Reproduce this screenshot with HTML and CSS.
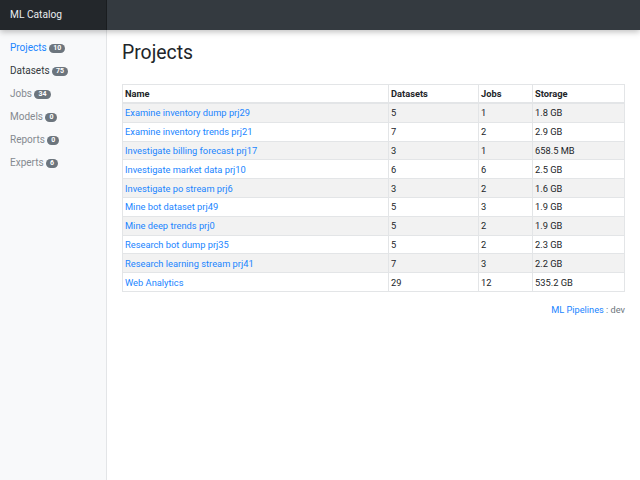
FILE: index.html
```html
<!DOCTYPE html>
<html>
<head>
<meta charset="utf-8">
<link rel="stylesheet" href="styles.css">
</head>
<body>
<header class="navbar">
  <div class="brand">ML Catalog</div>
  <div class="navfill"></div>
</header>
<div class="layout">
  <nav class="sidebar">
    <a class="nav-link active">Projects <span class="badge">10</span></a>
    <a class="nav-link hover">Datasets <span class="badge">75</span></a>
    <a class="nav-link">Jobs <span class="badge">34</span></a>
    <a class="nav-link">Models <span class="badge">0</span></a>
    <a class="nav-link">Reports <span class="badge">0</span></a>
    <a class="nav-link">Experts <span class="badge">6</span></a>
  </nav>
  <main class="main">
    <h1 class="title">Projects</h1>
    <table class="table">
      <thead>
        <tr><th class="c-name">Name</th><th class="c-ds">Datasets</th><th class="c-jobs">Jobs</th><th>Storage</th></tr>
      </thead>
      <tbody>
        <tr><td><a>Examine inventory dump prj29</a></td><td>5</td><td>1</td><td>1.8 GB</td></tr>
        <tr><td><a>Examine inventory trends prj21</a></td><td>7</td><td>2</td><td>2.9 GB</td></tr>
        <tr><td><a>Investigate billing forecast prj17</a></td><td>3</td><td>1</td><td>658.5 MB</td></tr>
        <tr><td><a>Investigate market data prj10</a></td><td>6</td><td>6</td><td>2.5 GB</td></tr>
        <tr><td><a>Investigate po stream prj6</a></td><td>3</td><td>2</td><td>1.6 GB</td></tr>
        <tr><td><a>Mine bot dataset prj49</a></td><td>5</td><td>3</td><td>1.9 GB</td></tr>
        <tr><td><a>Mine deep trends prj0</a></td><td>5</td><td>2</td><td>1.9 GB</td></tr>
        <tr><td><a>Research bot dump prj35</a></td><td>5</td><td>2</td><td>2.3 GB</td></tr>
        <tr><td><a>Research learning stream prj41</a></td><td>7</td><td>3</td><td>2.2 GB</td></tr>
        <tr><td><a>Web Analytics</a></td><td>29</td><td>12</td><td>535.2 GB</td></tr>
      </tbody>
    </table>
    <footer class="footer"><a>ML Pipelines</a> : dev</footer>
  </main>
</div>
</body>
</html>
```
FILE: styles.css
```css
html, body {
  margin: 0;
  padding: 0;
  height: 100%;
}
body {
  font-family: Roboto, "Liberation Sans", Arial, sans-serif;
  font-size: 10px;
  color: #212529;
  background: #fff;
}
a {
  color: #1a85ff;
  text-decoration: none;
}
.navbar {
  display: flex;
  height: 30px;
  background: #343a40;
  box-shadow: 0 2px 6px rgba(0,0,0,0.25);
  position: relative;
  z-index: 2;
}
.brand {
  width: 107px;
  box-sizing: border-box;
  padding-left: 10px;
  line-height: 30px;
  color: #e9ecef;
  font-size: 10.2px;
  background: #23272b;
  box-shadow: inset -1px 0 0 rgba(0,0,0,0.25);
}
.navfill {
  flex: 1;
}
.layout {
  display: flex;
  height: calc(100% - 30px);
}
.sidebar {
  width: 106px;
  background: #f8f9fa;
  border-right: 1px solid #e3e5e7;
  display: flex;
  flex-direction: column;
  padding-top: 10px;
  gap: 7px;
}
.nav-link {
  display: block;
  padding: 0 10px;
  height: 16px;
  line-height: 16px;
  font-size: 10px;
  color: #858a90;
}
.nav-link.active {
  color: #1a85ff;
}
.nav-link.hover {
  color: #343a40;
}
.badge {
  display: inline-block;
  background: #6c757d;
  color: #fff;
  font-size: 7px;
  font-weight: bold;
  line-height: 9px;
  padding: 0 4px;
  border-radius: 5px;
  vertical-align: 1px;
}
.main {
  flex: 1;
  padding: 0 15px;
}
.title {
  font-size: 19.4px;
  font-weight: normal;
  margin: 11px 0 19px;
  line-height: 24px;
}
.table {
  width: 100%;
  border-collapse: collapse;
  border: 1px solid #dee2e6;
  font-size: 9.3px;
}
.table th, .table td {
  border: 1px solid #e3e5e7;
  padding: 0 2px;
  height: 17.8px;
  text-align: left;
}
.table th {
  font-weight: bold;
  border-bottom-width: 2px;
  height: 17px;
}
.c-name { width: 261px; }
.c-ds { width: 85px; }
.c-jobs { width: 49px; }
.table tbody tr:nth-child(odd) {
  background: #f2f2f2;
}
.footer {
  text-align: right;
  margin-top: 12px;
  font-size: 9.2px;
  color: #6c757d;
}
```
